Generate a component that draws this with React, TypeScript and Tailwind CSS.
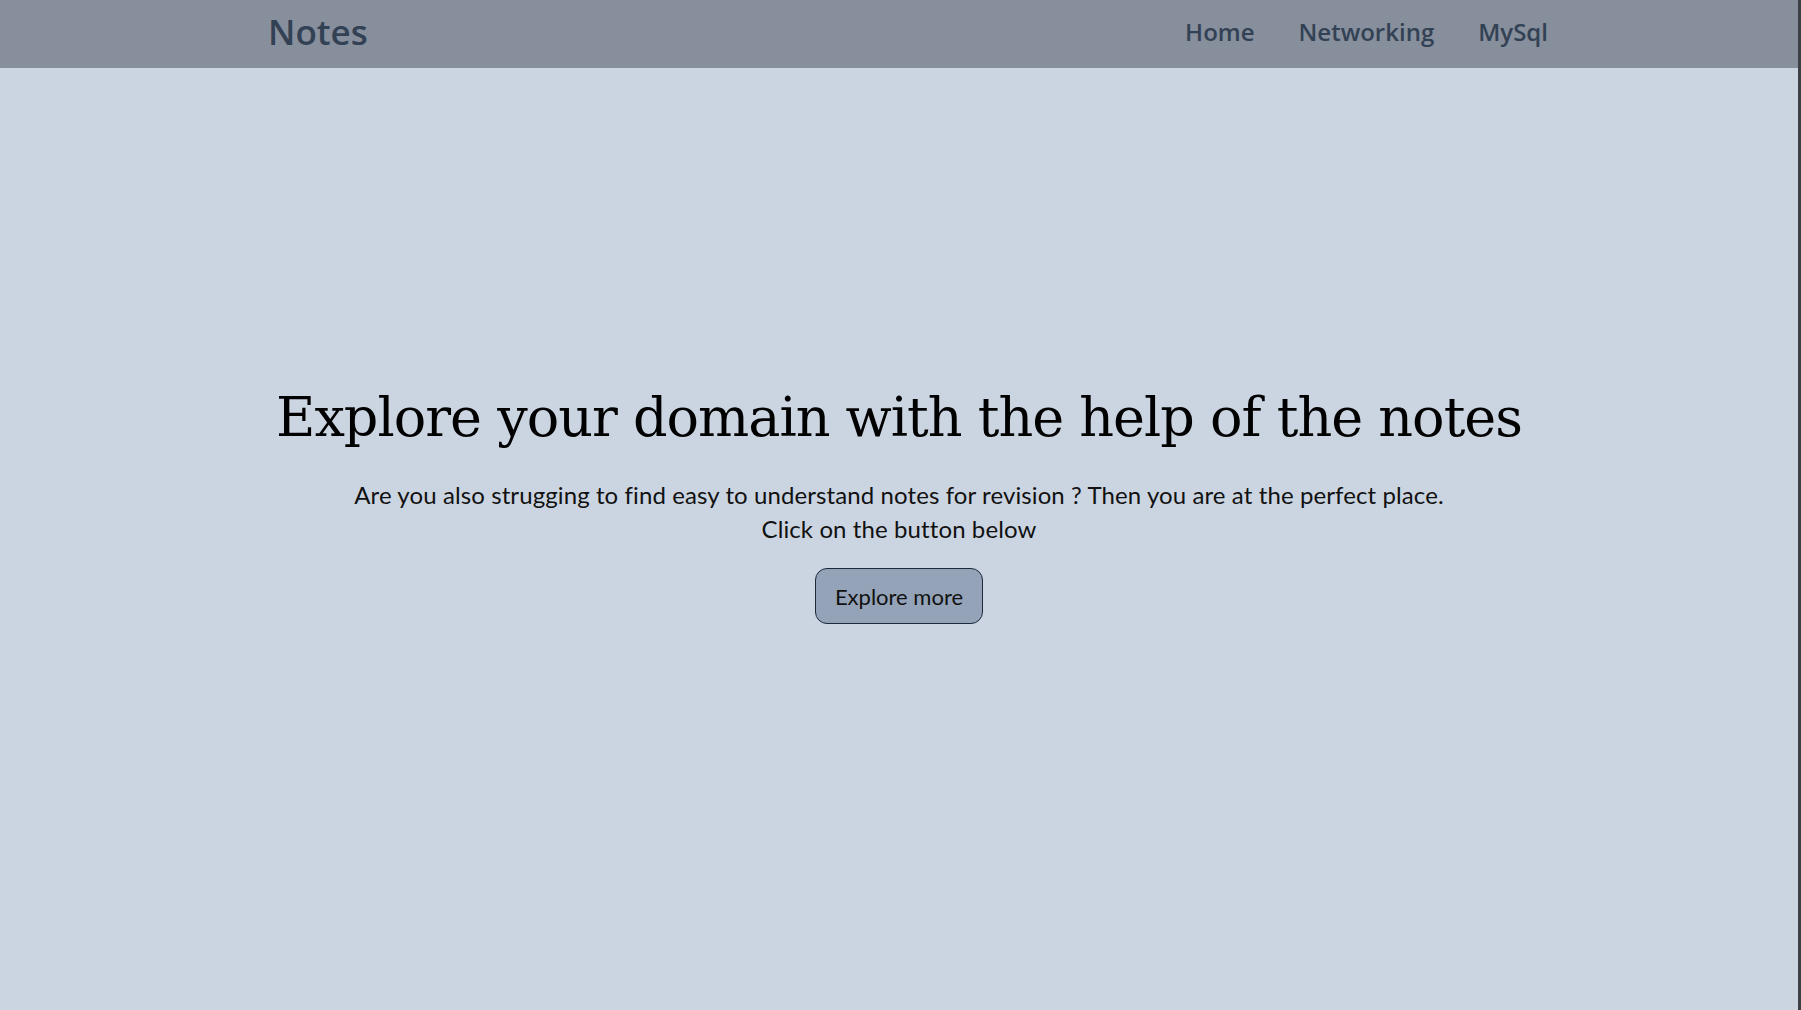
import React from "react";

const NAV_LINKS = ["Home", "Networking", "MySql"];

function Navbar() {
  return (
    <nav className="h-[68px] bg-[#868f9b] flex items-center justify-between pl-[268px] pr-[250px] font-['Open_Sans',sans-serif] font-semibold text-[#334155]">
      <a href="#" className="text-[35px] leading-none -mt-[5px]">
        Notes
      </a>
      <ul className="flex items-center gap-[44px] text-[24px] leading-none -mt-[4px]">
        {NAV_LINKS.map((link) => (
          <li key={link}>
            <a href="#">{link}</a>
          </li>
        ))}
      </ul>
    </nav>
  );
}

function Hero() {
  return (
    <section className="flex flex-col items-center pt-[323px] text-center">
      <h1 className="text-[54px] leading-none tracking-[-1px] text-black font-['DejaVu_Serif',serif]">
        Explore your domain with the help of the notes
      </h1>
      <p className="mt-[33px] text-[24px] leading-[34px] tracking-[0.1px] text-[#111] font-['Lato',sans-serif]">
        Are you also strugging to find easy to understand notes for revision ? Then you are at the perfect place.
        <br />
        Click on the button below
      </p>
      <button className="mt-[22px] w-[168px] h-[56px] rounded-[12px] border border-[#1e293b] bg-[#94a3b8] text-[22px] text-[#111] font-['Lato',sans-serif]">
        Explore more
      </button>
    </section>
  );
}

export default function App() {
  return (
    <div className="flex h-[1010px] w-full overflow-hidden bg-[#cbd5e1]">
      <div className="flex-1 flex flex-col">
        <Navbar />
        <Hero />
      </div>
      <div className="w-[3px] bg-[#3c3f44]" />
    </div>
  );
}
